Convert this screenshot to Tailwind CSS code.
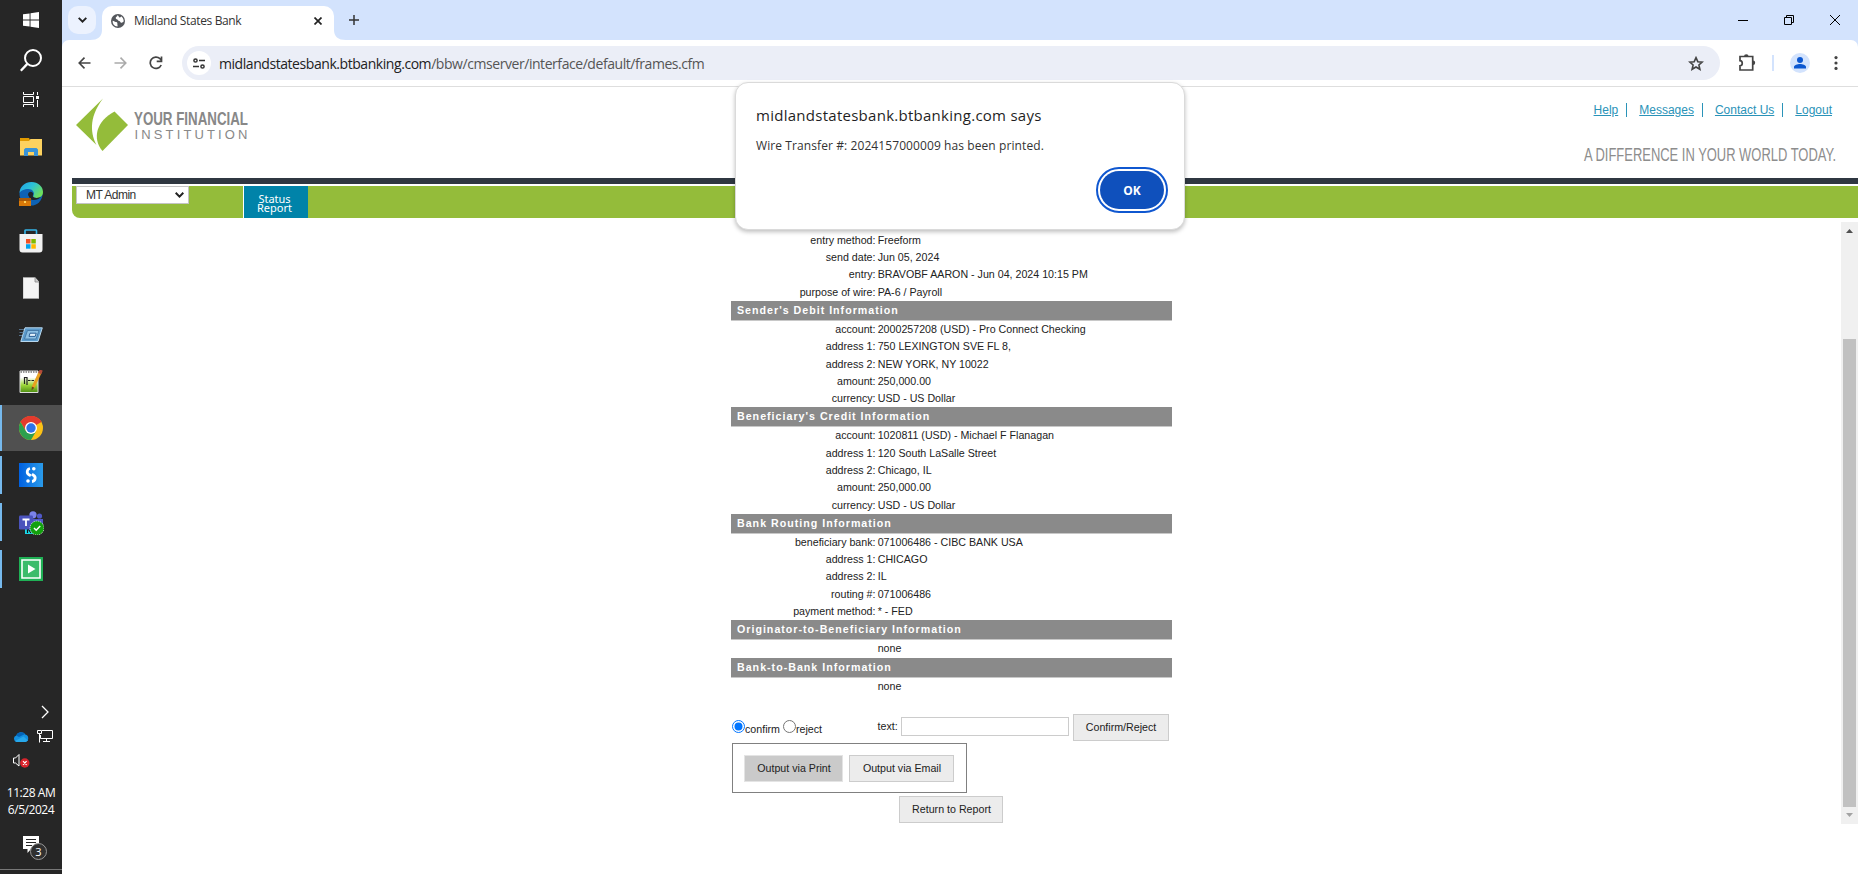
<!DOCTYPE html>
<html lang="en">
<head>
<meta charset="utf-8">
<title>Midland States Bank</title>
<script src="https://cdn.jsdelivr.net/npm/@tailwindcss/browser@4"></script>
</head>
<body class="flex h-[874px] w-[1858px] overflow-hidden bg-white font-['Liberation_Sans',Arial,sans-serif] text-[#222]">

<!-- Taskbar -->
<aside class="flex h-full w-[62px] shrink-0 flex-col bg-[#262626] font-['Open_Sans',sans-serif] text-white">
  <div class="flex h-10 items-center justify-center">
    <svg class="size-4" viewBox="0 0 16 16" fill="#fff"><path d="M0 2.3 6.6 1.4V7.6H0zM7.5 1.2 16 0V7.6H7.5zM0 8.5H6.6V14.6L0 13.7zM7.5 8.5H16V16L7.5 14.8z"/></svg>
  </div>
  <div class="flex h-10 items-center justify-center">
    <svg class="h-[23px] w-[22px]" viewBox="0 0 22 23" fill="none" stroke="#fff" stroke-width="2"><circle cx="13" cy="9" r="8"/><path d="M7.3 14.9.8 21.8" stroke-width="2.4"/></svg>
  </div>
  <div class="flex h-[43px] justify-center pt-3">
    <svg class="size-4" viewBox="0 0 16 16" fill="none" stroke="#fff"><path d="M.5 0v2.5h10V0M.5 15v-2.5h10V15M.5 4.5h10v6H.5zM14.5 0v3M14.5 8v7"/><path d="M13 4h3v3h-3z" fill="#fff" stroke="none"/></svg>
  </div>
  <div class="flex h-[47px] items-center justify-center">
    <svg class="h-[18px] w-[22px]" viewBox="0 0 22 18"><path d="M0 0h9l1 2v3H0z" fill="#e19a00"/><path d="M0 3h9l1.500-2H22v16.500H0z" fill="#fdd25f"/><path d="M4 18v-6.500l1.500-1.500h11l1.500 1.500V18h-4v-4H8v4z" fill="#3a93d6"/></svg>
  </div>
  <div class="flex h-[47px] items-center justify-center">
    <svg class="size-6" viewBox="0 0 24 24"><defs><linearGradient id="eg" x1="0" x2="1" y1="0" y2=".6"><stop stop-color="#1f9fe8"/><stop offset=".5" stop-color="#2cc1d6"/><stop offset="1" stop-color="#6fe05a"/></linearGradient></defs><circle cx="12" cy="12" r="11.500" fill="#0e62b4"/><path d="M.5 11C1 4 6 0 12.500 0 19 0 24 4.500 24 10c0 4-3 6-6.500 6-2.500 0-4-1-3-2.500C16 10.500 13.500 7 9.500 7 5 7 1.500 9 .5 11z" fill="url(#eg)"/><path d="M9 13c0-3 3-4 4.500-2.500 1.500 1.300 0 2.700.3 3.700.7 1.800 4.700 2.600 8.700.3-2 3-9 5-11.500 2z" fill="#202428"/><path d="M0 16h12v8H0z" fill="#d97908"/><path d="M0 16h12v3H0z" fill="#a85a08"/><path d="M5 19h2v2H5z" fill="#ffd25a"/></svg>
  </div>
  <div class="flex h-[47px] items-center justify-center">
    <svg class="h-6 w-6" viewBox="0 0 24 24"><path d="M6 6V1.500Q6 1 7 1h9.500q1 0 1 .5V6" fill="none" stroke="#35b4e8" stroke-width="1.600"/><path d="M.5 5h23v15.500a3 3 0 0 1-3 3h-17a3 3 0 0 1-3-3z" fill="#f1f1f1"/><path d="M7 10h4.500v4.500H7z" fill="#f25022"/><path d="M12.300 10h4.500v4.500h-4.500z" fill="#7fba00"/><path d="M7 15.200h4.500v4.500H7z" fill="#00a4ef"/><path d="M12.300 15.200h4.500v4.500h-4.500z" fill="#ffb900"/></svg>
  </div>
  <div class="flex h-[47px] items-center justify-center">
    <svg class="h-[22px] w-4" viewBox="0 0 16 22"><path d="M0 .5h12L16 5v16.500H0z" fill="#f4f4f4" stroke="#aaa" stroke-width=".7"/><path d="M12 .5V5h4" fill="#ccc" stroke="#888" stroke-width=".8"/></svg>
  </div>
  <div class="flex h-[47px] items-center justify-center">
    <svg class="h-4 w-6" viewBox="0 0 24 16"><path d="M6 .8h17.300L19 14.500H1.800z" fill="#5b9bcc" stroke="#b8d8ee"/><path d="M8.500 3.500h11.500L17 12H5.500z" fill="#8cc0e4" stroke="#3d6f9c" stroke-width=".8"/><path d="M11 6.200h6.200l-1 3.200H10z" fill="#e6f2fb" stroke="#2a5f95"/><path d="M0 2.500h5M.5 5.500h4M0 8.500h3" stroke="#56718a"/></svg>
  </div>
  <div class="flex h-[47px] items-center justify-center">
    <svg class="h-6 w-6" viewBox="0 0 24 24"><defs><linearGradient id="np" x2="0" y2="1"><stop offset=".3" stop-color="#fff"/><stop offset=".65" stop-color="#9ed83a"/><stop offset="1" stop-color="#4d8d12"/></linearGradient></defs><path d="M1 1h18v21.500H1z" fill="url(#np)" stroke="#ddd"/><path d="M1.500 2h17" stroke="#777" stroke-width="1.500" stroke-dasharray="1.500 1"/><path d="M5.500 14V7.500h2.500V15M9 10.500h2.500M12.500 10.500H15" fill="none" stroke="#222" stroke-width="1.200"/><path d="M21.500 1.500 14 17.500" stroke="#e8a020" stroke-width="3"/><path d="m22.300 0-1.600 3.500" stroke="#b44a3a" stroke-width="3.200"/><path d="m12.500 20.500.4-4 2.500 1.200z" fill="#6b4a1b"/></svg>
  </div>
  <div class="flex h-[46px] items-center border-l-2 border-[#76b9ed] bg-[#505050] pl-[17px]">
    <svg class="size-6" viewBox="0 0 24 24"><circle cx="12" cy="12" r="12" fill="#fbc116"/><path d="M12 12 1.600 6A12 12 0 0 1 22.400 6z" fill="#e33b2e"/><path d="M12 6h10.400A12 12 0 0 0 1.600 6l5.200 9z" fill="#e33b2e"/><path d="M1.600 6A12 12 0 0 0 12 24l5.200-9-5.200 3-5.200-3z" fill="#2da04e"/><circle cx="12" cy="12" r="6" fill="#fff"/><circle cx="12" cy="12" r="4.700" fill="#2f73e8"/></svg>
  </div>
  <div class="mt-[5px] flex h-[38px] items-center border-l-2 border-[#76b9ed] pl-[17px]">
    <svg class="size-6" viewBox="0 0 24 24"><defs><linearGradient id="sg" x2="1"><stop stop-color="#0060e0"/><stop offset="1" stop-color="#2a9bea"/></linearGradient></defs><path d="M0 0h24v24H0z" fill="url(#sg)"/><path d="M11 5.500a3.400 3.400 0 0 0-1 6.300l1.800 1M13 18.500a3.400 3.400 0 0 0 1.500-6.300l-1.600-1" fill="none" stroke="#fff" stroke-width="2.800"/><circle cx="14.800" cy="5.800" r="1.800" fill="#fff"/><circle cx="9" cy="18" r="1.800" fill="#fff"/></svg>
  </div>
  <div class="mt-[9px] flex h-[38px] items-center border-l-2 border-[#76b9ed] pl-[17px]">
    <svg class="mt-[2px] h-6 w-[25px]" viewBox="0 0 25 24"><circle cx="14" cy="3.800" r="3.600" fill="#7b83eb"/><circle cx="20.500" cy="5" r="2.600" fill="#5059c9"/><path d="M9 8h15v10H9z" fill="#5059c9"/><path d="M6 16h8v7H6z" fill="#19d8e8"/><path d="M8.500 22v-5l3.500 5" fill="none" stroke="#111" stroke-width="1.200"/><rect y="4.500" width="14" height="14" rx="1.200" fill="#4b53bc"/><path d="M3.500 8.500h7M7 8.500V15" stroke="#fff" stroke-width="1.800"/><circle cx="18" cy="17" r="7" fill="#13a10e" stroke="#fff" stroke-width=".8" stroke-dasharray="1 1"/><path d="m15 17 2.200 2.200 4-4.200" fill="none" stroke="#fff" stroke-width="1.500"/></svg>
  </div>
  <div class="mt-[9px] flex h-[38px] items-center border-l-2 border-[#76b9ed] pl-[17px]">
    <svg class="size-6" viewBox="0 0 24 24"><path d="M0 0h24v24H0z" fill="#1fb055"/><path d="M3 3h18v18H3z" fill="#3cbc6b" stroke="#fff" stroke-width="1.600"/><path d="M9 7.500 16.500 12 9 16.500z" fill="#fff"/></svg>
  </div>
  <div class="mt-[117px] flex justify-end pr-[13px]">
    <svg class="h-[14px] w-[8px]" viewBox="0 0 8 14" fill="none" stroke="#fff" stroke-width="1.300"><path d="m1 1 6 6-6 6"/></svg>
  </div>
  <div class="mt-[9px] flex h-4 items-center gap-2 pl-[13px]">
    <svg class="h-[11px] w-4" viewBox="0 0 16 11"><path d="M3.500 11a3.400 3.400 0 0 1-.3-6.500A5.200 5.200 0 0 1 12.300 3.500 3.900 3.900 0 0 1 12.500 11z" fill="#1490df"/><path d="M3.200 4.500A5.200 5.200 0 0 1 12 3L6 6z" fill="#0364b8"/><path d="M2 10 10.500 5.500 15 9.500 12.500 11h-9z" fill="#28a8ea"/></svg>
    <svg class="h-[14px] w-4" viewBox="0 0 16 14" fill="none" stroke="#fff"><path d="M5 1.500h10.500v8H3.500V6M.5 1.500h4v3h-4zM2.500 4.500v9M9.500 9.500v3M6 12.500h7"/></svg>
  </div>
  <div class="mt-[10px] flex h-4 pl-[13px]">
    <svg class="h-[14px] w-[17px]" viewBox="0 0 17 14" fill="none" stroke="#fff"><path d="M.5 4v5h2L6 12V.5L2.500 4z"/><circle cx="11.800" cy="9" r="4.700" fill="#d9242c" stroke="none"/><path d="m10 7.200 3.600 3.600m0-3.600L10 10.800" stroke-width="1.200"/></svg>
  </div>
  <div class="mt-[14px] text-center text-[12px] leading-[17px] tracking-[-0.45px]"><div>11:28 AM</div><div>6/5/2024</div></div>
  <div class="mt-[18px] flex h-[26px] pl-[23px]">
    <svg class="h-[26px] w-[26px]" viewBox="0 0 26 26"><path d="M0 0h16v13H8l-3.500 4V13H0z" fill="#fff"/><path d="M3 3.500h10M3 6.500h10M3 9.500h6" stroke="#262626"/><circle cx="15.500" cy="15.500" r="8" fill="#303030" stroke="#999"/><text x="15.500" y="19.500" text-anchor="middle" font-size="11" fill="#fff" font-family="Open Sans">3</text></svg>
  </div>
  <div class="mt-auto mb-1 h-px bg-[#777]"></div>
</aside>

<div class="flex min-w-0 flex-1 flex-col">
  <!-- Tab strip -->
  <div class="flex h-10 shrink-0 items-end bg-[#d3e3fd] pl-[6px] font-['Open_Sans',sans-serif]">
    <div class="mb-[6px] flex size-7 items-center justify-center rounded-[10px] bg-[#ecf2fe]">
      <svg class="h-[6px] w-[9px]" viewBox="0 0 9 6" fill="none" stroke="#222" stroke-width="1.900"><path d="m.7.8 3.800 3.800L8.300.8"/></svg>
    </div>
    <svg class="-ml-2 h-[10px] w-[14px]" viewBox="0 0 14 10" fill="#fff"><path d="M14 0v10H2Q14 10 14 0z"/></svg>
    <div class="flex h-[34px] w-[232px] items-center rounded-t-[10px] bg-white pr-[12px] pb-[5px] pl-[9px]">
      <svg class="size-[14px]" viewBox="0 0 14 14"><circle cx="7" cy="7" r="7" fill="#54575c"/><path d="M1.600 6.800C3 6.800 3.500 8.200 5 8c1.400-.1 1.500 1 1.400 2.600 0 1 .6 1.500 0 2A5.700 5.700 0 0 1 1.600 6.800zM6.500 1.300c-.3 1.500-1.800 1.500-1.800 2.800 0 1.400 1.800.9 2.300 2.100.4 1 2 .5 2.200 1.600.2.900 1.200 1.200 2 .7.600-.3 1.200-.2 1.500-1.500 0-2-1.500-4-2.700-4.700 0 1-.6 1.300-1.500 1.100-.8-.2-.7-1.400-2-2.100z" fill="#fff"/></svg>
      <span class="ml-[9px] text-[12px] tracking-[-0.36px] whitespace-nowrap text-[#333]">Midland States Bank</span>
      <svg class="ml-auto size-2" viewBox="0 0 8 8" stroke="#222" stroke-width="1.700"><path d="m.5.5 7 7m0-7-7 7"/></svg>
    </div>
    <svg class="h-[10px] w-3" viewBox="0 0 12 10" fill="#fff"><path d="M0 0v10h12Q0 10 0 0z"/></svg>
    <svg class="mb-[15px] ml-[3px] size-[10px]" viewBox="0 0 10 10" stroke="#333" stroke-width="1.500"><path d="M5 0v10M0 5h10"/></svg>
    <div class="mr-[18px] mb-[14px] ml-auto flex items-center gap-9 self-end">
      <svg class="h-3 w-[10px]" viewBox="0 0 10 12" stroke="#000"><path d="M0 6.500h10"/></svg>
      <svg class="size-[10px]" viewBox="0 0 10 10" fill="none" stroke="#000"><path d="M.5 2.500h7v7h-7zM2.500 2.500v-2h7v7h-2"/></svg>
      <svg class="h-3 w-[10px]" viewBox="0 0 10 12" stroke="#000"><path d="m0 1 10 10M10 1 0 11"/></svg>
    </div>
  </div>
  <!-- Toolbar -->
  <div class="h-[47px] shrink-0 bg-[#d3e3fd]">
    <div class="flex h-full items-center rounded-t-[7px] border-b border-[#dedede] bg-white pl-4 font-['Open_Sans',sans-serif]">
      <svg class="h-3 w-[13px]" viewBox="0 0 13 12" fill="none" stroke="#444" stroke-width="1.600"><path d="M12.500 6H1.200M6.500.6 1.200 6l5.300 5.400"/></svg>
      <svg class="ml-[23px] h-3 w-[13px]" viewBox="0 0 13 12" fill="none" stroke="#aaa" stroke-width="1.600"><path d="M.5 6h11.300M6.500.6 11.800 6l-5.300 5.400"/></svg>
      <svg class="ml-[22px] size-[14px]" viewBox="0 0 14 14" fill="none" stroke="#444" stroke-width="1.700"><path d="M12.200 9A5.700 5.700 0 1 1 11 2.700l1.500 1.600"/><path d="M12.500.5v4.800H7.700" /></svg>
      <div class="ml-[19px] flex h-[34px] w-[1538px] items-center rounded-full bg-[#ebeef7] pr-4 pl-[5px]">
        <div class="flex size-6 items-center justify-center rounded-full bg-white">
          <svg class="h-[11px] w-3" viewBox="0 0 12 11" fill="none" stroke="#333" stroke-width="1.500"><circle cx="2.500" cy="2.500" r="1.600"/><path d="M6 2.500h6M0 8.500h6"/><circle cx="9.500" cy="8.500" r="1.600"/></svg>
        </div>
        <span class="ml-2 text-[14px] tracking-[-0.44px] whitespace-nowrap text-[#555]"><span class="text-[#222]">midlandstatesbank.btbanking.com</span>/bbw/cmserver/interface/default/frames.cfm</span>
        <svg class="ml-auto h-[15px] w-4" viewBox="0 0 16 15" fill="none" stroke="#444" stroke-width="1.600"><path d="m8 1.700 1.800 4 4.400.4-3.300 2.900 1 4.300L8 11l-3.900 2.300 1-4.300L1.800 6.100l4.400-.4z"/></svg>
      </div>
      <svg class="ml-[18px] h-[18px] w-[18px]" viewBox="0 0 18 18" fill="none" stroke="#444" stroke-width="1.700"><path d="M2 2.500h12.700v13.500H2v-4.200c3-.2 3-4.900 0-5.100z"/><path d="M6 2.500a2.300 2.300 0 0 1 4.600 0zM15 6.500a2.200 2.200 0 0 1 0 4.400z" fill="#444" stroke="none"/></svg>
      <div class="ml-4 h-4 w-[2px] bg-[#d3e3fd]"></div>
      <svg class="ml-4 size-5" viewBox="0 0 20 20"><circle cx="10" cy="10" r="10" fill="#d3e3fd"/><circle cx="10" cy="7" r="3" fill="#0b57d0"/><path d="M4 15.500v-1.500c0-2 3.500-3 6-3s6 1 6 3v1.500z" fill="#0b57d0"/></svg>
      <svg class="ml-[24px] h-[14px] w-1" viewBox="0 0 4 14" fill="#444"><circle cx="2" cy="1.600" r="1.600"/><circle cx="2" cy="7" r="1.600"/><circle cx="2" cy="12.400" r="1.600"/></svg>
    </div>
  </div>

  <!-- Bank header -->
  <header class="flex h-[91px] shrink-0 justify-between pl-[14px]">
    <svg class="mt-[10px] h-[60px] w-[180px] overflow-visible" viewBox="0 0 180 60"><path d="M27 1.500 0 28 20.500 48C15.500 38 11.500 22 27 1.500z" fill="#94bc3a"/><path d="M38.500 14.500 52 28 26.500 54C16 42 20 24 38.500 14.500z" fill="#94bc3a"/>
      <text x="58" y="28" font-family="Liberation Sans" font-weight="bold" font-size="18" fill="#888" textLength="114" lengthAdjust="spacingAndGlyphs">YOUR FINANCIAL</text>
      <text x="58.500" y="41.500" font-family="Liberation Sans" font-size="13" fill="#888" textLength="113">INSTITUTION</text></svg>
    <div class="mr-[21px] flex flex-col items-end">
      <nav class="mt-[15px] mr-[5px] flex text-[12px] leading-[16px] text-[#2a93b8]">
        <a class="mr-2 underline">Help</a><span class="mt-px mr-[12px] h-[14px] w-px bg-[#2a93b8]"></span>
        <a class="mr-2 underline">Messages</a><span class="mt-px mr-[12px] h-[14px] w-px bg-[#2a93b8]"></span>
        <a class="mr-2 underline">Contact Us</a><span class="mt-px mr-[12px] h-[14px] w-px bg-[#2a93b8]"></span>
        <a class="underline">Logout</a>
      </nav>
      <svg class="mt-[25px] h-[22px] w-[254px] overflow-visible" viewBox="0 0 254 22"><text x="1" y="18" font-family="Liberation Sans" font-size="18.500" fill="#8d8d8d" textLength="252" lengthAdjust="spacingAndGlyphs">A DIFFERENCE IN YOUR WORLD TODAY.</text></svg>
    </div>
  </header>
  <div class="ml-[10px] h-[6px] shrink-0 bg-[#2f3741]"></div>
  <div class="mt-[2px] ml-[10px] flex h-8 shrink-0 rounded-bl-[8px] bg-[#94bc3a] pl-1">
    <div class="flex h-[18px] w-[113px] items-center justify-between border border-[#c4c4c4] bg-white pr-[4px] pl-[9px] text-[12px] leading-none text-[#333]"><span class="tracking-[-0.5px]">MT Admin</span>
      <svg class="h-[6px] w-[9px]" viewBox="0 0 9 6" fill="none" stroke="#222" stroke-width="2"><path d="m.7.8 3.800 3.800L8.300.8"/></svg>
    </div>
    <div class="ml-[54px] w-[65px] border-l border-white bg-[#0083a9] pt-[8px] pr-[3px] text-center font-['Noto_Sans',sans-serif] text-[11px] leading-[9px] text-white">Status<br>Report</div>
  </div>

  <!-- Report frame -->
  <div class="mt-[4px] flex h-[602px] shrink-0">
    <main class="min-w-0 flex-1 pt-[9.880px] pl-[669px] text-[10.667px] leading-[17.280px]">
      <div class="w-[441px] [&_dl]:grid [&_dl]:grid-cols-[144.500px_1fr] [&_dl]:gap-x-[2.200px] [&_dt]:text-right [&_dt]:h-[17.280px] [&_h2]:h-5 [&_h2]:border-b [&_h2]:border-[#c8c8c8] [&_h2]:bg-[#8a8a8a] [&_h2]:pl-[6px] [&_h2]:text-[10.667px] [&_h2]:leading-[18px] [&_h2]:font-bold [&_h2]:tracking-[1px] [&_h2]:text-white">
        <dl><dt>entry method:</dt><dd>Freeform</dd><dt>send date:</dt><dd>Jun 05, 2024</dd><dt>entry:</dt><dd>BRAVOBF AARON - Jun 04, 2024 10:15 PM</dd><dt>purpose of wire:</dt><dd>PA-6 / Payroll</dd></dl>
        <h2>Sender's Debit Information</h2>
        <dl><dt>account:</dt><dd>2000257208 (USD) - Pro Connect Checking</dd><dt>address 1:</dt><dd>750 LEXINGTON SVE FL 8,</dd><dt>address 2:</dt><dd>NEW YORK, NY 10022</dd><dt>amount:</dt><dd>250,000.00</dd><dt>currency:</dt><dd>USD - US Dollar</dd></dl>
        <h2>Beneficiary's Credit Information</h2>
        <dl><dt>account:</dt><dd>1020811 (USD) - Michael F Flanagan</dd><dt>address 1:</dt><dd>120 South LaSalle Street</dd><dt>address 2:</dt><dd>Chicago, IL</dd><dt>amount:</dt><dd>250,000.00</dd><dt>currency:</dt><dd>USD - US Dollar</dd></dl>
        <h2>Bank Routing Information</h2>
        <dl><dt>beneficiary bank:</dt><dd>071006486 - CIBC BANK USA</dd><dt>address 1:</dt><dd>CHICAGO</dd><dt>address 2:</dt><dd>IL</dd><dt>routing #:</dt><dd>071006486</dd><dt>payment method:</dt><dd>* - FED</dd></dl>
        <h2>Originator-to-Beneficiary Information</h2>
        <dl><dt></dt><dd>none</dd></dl>
        <h2>Bank-to-Bank Information</h2>
        <dl><dt></dt><dd>none</dd></dl>
      </div>
      <div class="mt-[19px] flex h-[27px] pl-px">
        <div class="flex w-[145.500px] pt-[5px]">
          <svg class="mt-px size-[13px]" viewBox="0 0 13 13"><circle cx="6.500" cy="6.500" r="6" fill="#fff" stroke="#0075ff"/><circle cx="6.500" cy="6.500" r="4" fill="#0075ff"/></svg>
          <span class="pt-[2px]">confirm</span>
          <svg class="mt-px ml-[3px] size-[13px]" viewBox="0 0 13 13"><circle cx="6.500" cy="6.500" r="6" fill="#fff" stroke="#767676"/></svg>
          <span class="pt-[2px]">reject</span>
        </div>
        <span class="w-[23.500px] pt-1">text:</span>
        <div class="mt-[3px] h-[19px] w-[168px] border border-[#ccc]"></div>
        <button class="ml-1 h-[27px] w-24 border border-[#ccc] bg-[#ececec]">Confirm/Reject</button>
      </div>
      <div class="mt-[2px] ml-px flex h-[50px] w-[235px] gap-[6px] border border-[#808080] pt-[11px] pl-[11px]">
        <button class="h-[27px] w-[99px] border border-[#e4e4e4] bg-[#cacaca] pl-px">Output via Print</button>
        <button class="h-[27px] w-[105px] border border-[#ccc] bg-[#ececec] pl-px">Output via Email</button>
      </div>
      <button class="mt-[3px] ml-[168px] block h-[27px] w-[104px] border border-[#ccc] bg-[#ececec] pl-px">Return to Report</button>
    </main>
    <div class="flex w-[17px] flex-col items-center bg-[#f0f0f0] pt-[7px] pb-[7px]">
      <svg class="h-1 w-[7px]" viewBox="0 0 7 4" fill="#505050"><path d="M3.500 0 7 4H0z"/></svg>
      <div class="mt-[106px] h-[468px] w-[13px] bg-[#c1c1c1]"></div>
      <svg class="mt-auto h-1 w-[7px]" viewBox="0 0 7 4" fill="#a3a3a3"><path d="M3.500 4 7 0H0z"/></svg>
    </div>
  </div>
</div>

<!-- Alert dialog -->
<div class="absolute top-[82px] left-[735px] flex h-[148px] w-[450px] flex-col rounded-[13px] border border-[#dadada] bg-white px-[20px] pt-[20px] font-['Open_Sans',sans-serif] shadow-[0_2px_4px_rgba(0,0,0,.25)]">
  <div class="text-[15px] leading-6 font-medium tracking-[0.27px] whitespace-nowrap text-[#1f1f1f]">midlandstatesbank.btbanking.com says</div>
  <div class="mt-[9px] text-[12px] leading-5 tracking-[0.09px] whitespace-nowrap text-[#333]">Wire Transfer #: 2024157000009 has been printed.</div>
  <button class="mt-[15px] h-[38px] w-16 self-end rounded-full bg-[#0f50bc] pt-px text-[12px] font-bold text-white outline-2 outline-offset-2 outline-[#0f57d0]">OK</button>
</div>
</body>
</html>
